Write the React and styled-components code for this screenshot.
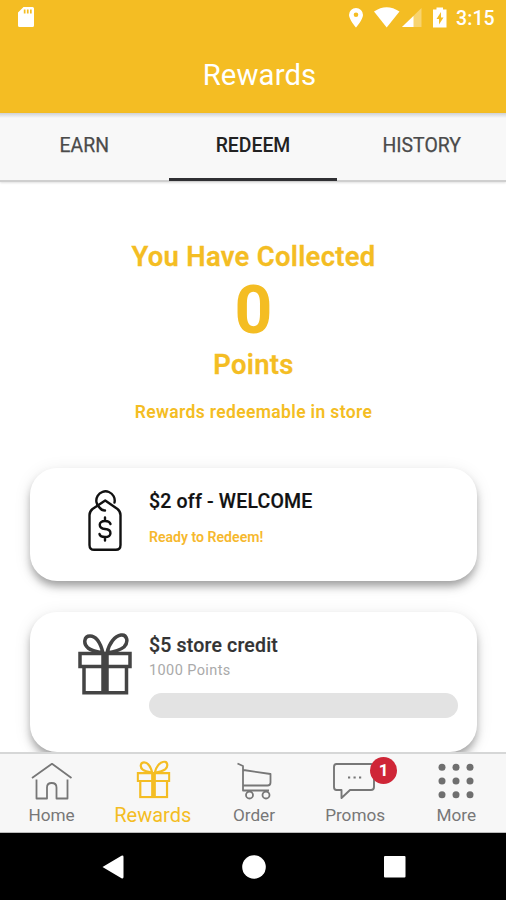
import React from "react";
import styled, { createGlobalStyle } from "styled-components";

const GOLD = "#f4bd23";

const GlobalStyle = createGlobalStyle`
  * { box-sizing: border-box; }
  body { margin: 0; background: #fff; font-family: Roboto, "Liberation Sans", sans-serif; }
  h1, h2, p { margin: 0; }
  svg { display: block; flex: none; }
`;

const Screen = styled.div`
  width: 506px;
  height: 900px;
  display: flex;
  flex-direction: column;
  overflow: hidden;
  background: #fff;
`;

const Header = styled.header`
  height: 113px;
  flex: none;
  background: ${GOLD};
  color: #fff;
`;

const StatusBar = styled.div`
  height: 36px;
  padding: 0 10px 0 16px;
  display: flex;
  justify-content: space-between;
  align-items: center;
`;

const StatusIcons = styled.div`
  display: flex;
  align-items: center;
`;

const Clock = styled.span`
  width: 40px;
  margin-left: 8px;
  padding-top: 1px;
  font-size: 19.5px;
  font-weight: 500;
  line-height: 36px;
  letter-spacing: 0.1px;
  white-space: nowrap;
`;

const Title = styled.h1`
  font-size: 29.3px;
  font-weight: 400;
  line-height: 34px;
  margin-top: 22px;
  padding-left: 13px;
  text-align: center;
  letter-spacing: 0.1px;
`;

const Tabs = styled.nav`
  height: 69px;
  flex: none;
  display: grid;
  grid-template-columns: repeat(3, 1fr);
  background: linear-gradient(#cfd1d5, #f8f8f8 5px);
  border-bottom: 2px solid #cfcfcf;
  box-shadow: 0 1px 2px rgba(0, 0, 0, 0.12);
`;

const Tab = styled.a`
  height: 68px;
  padding-top: 21px;
  border-bottom: 3px solid ${(p) => (p.$active ? "#303033" : "transparent")};
  text-align: center;
  font-size: 19.4px;
  font-weight: ${(p) => (p.$active ? 500 : 400)};
  line-height: 24px;
  color: ${(p) => (p.$active ? "#222" : "#4b4b4b")};
  -webkit-text-stroke: ${(p) => (p.$active ? 0 : 0.25)}px currentColor;
`;

const Content = styled.main`
  flex: 1;
  min-height: 0;
  overflow: hidden;
  display: flex;
  flex-direction: column;
`;

const Summary = styled.section`
  height: 286px;
  flex: none;
  padding: 59px 0 0 1px;
  display: flex;
  flex-direction: column;
  align-items: center;
  color: ${GOLD};
`;

const SummaryLabel = styled.h2`
  font-size: 27.4px;
  font-weight: 600;
  line-height: 32px;
  letter-spacing: 0.3px;
  -webkit-text-stroke: 0.3px currentColor;
`;

const Score = styled.div`
  font-size: 66px;
  font-weight: 700;
  line-height: 76px;
`;

const Hint = styled.p`
  margin-top: 20px;
  font-size: 17.5px;
  font-weight: 600;
  line-height: 22px;
  letter-spacing: 0.35px;
`;

const Card = styled.article`
  flex: none;
  height: ${(p) => p.$height}px;
  margin: 0 29px 31px 30px;
  border-radius: 27px;
  background: #fff;
  box-shadow: 0 6px 9px -1px rgba(0, 0, 0, 0.34), 0 3px 18px rgba(0, 0, 0, 0.09);
  display: grid;
  grid-template-columns: 119px 1fr;
  padding: 21px 19px 0 0;
`;

const CardIcon = styled.div`
  display: flex;
  justify-content: flex-end;
  align-items: flex-start;
  padding-right: ${(p) => p.$gap}px;
`;

const CardTitle = styled.h2`
  font-size: 19.5px;
  font-weight: 500;
  line-height: 26px;
  letter-spacing: 0.19px;
  color: ${(p) => p.$color};
  -webkit-text-stroke: 0.2px currentColor;
`;

const Ready = styled.p`
  margin-top: 12px;
  font-size: 14.1px;
  font-weight: 600;
  line-height: 20px;
  color: #f6b82e;
`;

const Cost = styled.p`
  margin-top: 2px;
  font-size: 14.5px;
  line-height: 20px;
  letter-spacing: 0.4px;
  color: #aaa;
`;

const Progress = styled.div`
  height: 25px;
  margin-top: 12px;
  border-radius: 13px;
  background: #e3e3e3;
`;

const BottomNav = styled.nav`
  height: 81px;
  flex: none;
  padding-left: 1px;
  display: grid;
  grid-template-columns: repeat(5, 101.2px);
  background: #f7f7f7;
  border-top: 2px solid #d6d7d7;
  border-bottom: 1px solid #bbb;
`;

const NavItem = styled.a`
  display: flex;
  flex-direction: column;
  align-items: center;
  color: ${(p) => (p.$active ? GOLD : "#777")};
  font-size: ${(p) => (p.$active ? 20 : 17.2)}px;
`;

const NavIcon = styled.div`
  position: relative;
  width: 64px;
  height: 48px;
`;

const NavLabel = styled.span`
  margin-top: 1px;
  line-height: 24px;
`;

const Badge = styled.span`
  position: absolute;
  left: 47px;
  top: 3px;
  width: 27px;
  height: 27px;
  border-radius: 50%;
  background: #cf2637;
  color: #fff;
  font-size: 17px;
  font-weight: 700;
  line-height: 27px;
  text-align: center;
`;

const SystemBar = styled.footer`
  height: 67px;
  flex: none;
  padding-left: 2px;
  display: flex;
  justify-content: center;
  align-items: center;
  gap: 118px;
  background: #000;
`;

function SdCard() {
  return (
    <svg width="20" height="22" viewBox="0 0 20 22">
      <path fill="#fff" fillRule="evenodd" d="M7.5 0H16.5Q18 0 18 1.500V18.500Q18 20 16.500 20H3.500Q2 20 2 18.500V5.500ZM7.800 2.500V6.500H9.500V2.500ZM10.900 2.500V6.500H12.600V2.500ZM14 2.500V6.500H15.700V2.500Z" />
    </svg>
  );
}

function SystemIcons() {
  return (
    <svg width="102" height="22" viewBox="346 7 102 22">
      <path fill="#fff" fillRule="evenodd" d="M356 8A7 7 0 0 1 363 15C363 19.5 356 27.500 356 27.500S349 19.500 349 15A7 7 0 0 1 356 8ZM356 12.400A2.300 2.300 0 1 0 356 17A2.300 2.300 0 0 0 356 12.400Z" />
      <path fill="#fff" d="M374 11.500Q386.500 3 399.500 11.500L386.700 27.500Z" />
      <path fill="#fff" opacity=".35" d="M421.500 8V27H402Z" />
      <path fill="#fff" d="M413.500 16V27H402Z" />
      <path fill="#fff" fillRule="evenodd" d="M433 9.500H436.500V7.500H443V9.500H446.500V27.500H433ZM441 12L436.500 19H439V24.500L443.500 17.500H441Z" />
    </svg>
  );
}

function TagIcon() {
  return (
    <svg width="36" height="64" viewBox="0 0 36 64" fill="none" stroke="#111" strokeWidth="2.400" strokeLinecap="round" strokeLinejoin="round">
      <path d="M27.500 13.500A9.200 9.200 0 1 0 12.500 18.500Q14.500 21.500 18 21.500" />
      <path d="M18.200 11.500L30.500 20Q33.500 22.500 33.500 26V56Q33.500 60.800 28.800 60.800H7.200Q2.500 60.800 2.500 56V26Q2.500 22.500 5.500 20Z" />
      <path d="M23.500 35Q22.500 32 18 32C11 32 11 39.500 18 40C25.500 40.500 25 48 18 48Q13 48 12.500 45M18 28.500V32M18 48V51.500" />
    </svg>
  );
}

function GiftIcon({ width, height, color }) {
  return (
    <svg width={width} height={height} viewBox="0 0 54 62" preserveAspectRatio="none" fill="none" stroke={color}>
      <path strokeWidth="3.500" d="M2 20.500H52V33.500H2ZM6 33V59.800H48.500V33" />
      <path strokeWidth="7.500" d="M27 19V60" />
      <path strokeWidth="3.500" d="M25 20C22 8 17 3 12 3C6 3 5 11 10 15C14 18 20 19 25 20ZM29 20C31 10 37 3 43 2C49 1 51 9 46 14C41 18 35 19 29 20Z" />
    </svg>
  );
}

function HomeIcon() {
  return (
    <svg width="64" height="48" viewBox="0 0 64 48" fill="none" stroke="#777" strokeWidth="1.800" strokeLinejoin="round">
      <path d="M12 24L32 9.800L51.500 24M16.500 25.500V44.500H27V33.500Q27 29 31.700 29Q36.500 29 36.500 33.500V44.500H47.500V25.500" />
    </svg>
  );
}

function CartIcon() {
  return (
    <svg width="64" height="48" viewBox="0 0 64 48" fill="none" stroke="#777" strokeWidth="1.800" strokeLinejoin="round">
      <path d="M15.500 9.500L21 12V36.500H47M21.500 16L48.500 20V28.500Q48.500 31.500 45.500 31.500H21.500" />
      <circle cx="27.500" cy="41" r="3.500" />
      <circle cx="44" cy="41" r="3.500" />
    </svg>
  );
}

function ChatIcon() {
  return (
    <svg width="64" height="48" viewBox="0 0 64 48" fill="none" stroke="#777" strokeWidth="1.900" strokeLinejoin="round">
      <path d="M13.500 10H48Q51 10 51 13V33Q51 36 48 36H27L18.500 44V36H13.500Q11 36 11 33V13Q11 10 13.500 10Z" />
      <path strokeWidth="2.200" strokeDasharray="2.200 3.300" d="M25 23.500H38.200" />
    </svg>
  );
}

function MoreIcon() {
  return (
    <svg width="64" height="48" viewBox="0 0 64 48" fill="#6f6f6f">
      {[13.2, 27, 40.8].map((y) => [18, 32, 46].map((x) => <circle key={`${x}-${y}`} cx={x} cy={y} r="3.500" />))}
    </svg>
  );
}

export default function App() {
  return (
    <Screen>
      <GlobalStyle />
      <Header>
        <StatusBar>
          <SdCard />
          <StatusIcons>
            <SystemIcons />
            <Clock>3:15</Clock>
          </StatusIcons>
        </StatusBar>
        <Title>Rewards</Title>
      </Header>
      <Tabs>
        <Tab>EARN</Tab>
        <Tab $active>REDEEM</Tab>
        <Tab>HISTORY</Tab>
      </Tabs>
      <Content>
        <Summary>
          <SummaryLabel>You Have Collected</SummaryLabel>
          <Score>0</Score>
          <SummaryLabel>Points</SummaryLabel>
          <Hint>Rewards redeemable in store</Hint>
        </Summary>
        <Card $height={113}>
          <CardIcon $gap={26}><TagIcon /></CardIcon>
          <div>
            <CardTitle $color="#111">$2 off - WELCOME</CardTitle>
            <Ready>Ready to Redeem!</Ready>
          </div>
        </Card>
        <Card $height={140}>
          <CardIcon $gap={17}><GiftIcon width={54} height={62} color="#444" /></CardIcon>
          <div>
            <CardTitle $color="#333">$5 store credit</CardTitle>
            <Cost>1000 Points</Cost>
            <Progress />
          </div>
        </Card>
      </Content>
      <BottomNav>
        <NavItem>
          <NavIcon><HomeIcon /></NavIcon>
          <NavLabel>Home</NavLabel>
        </NavItem>
        <NavItem $active>
          <NavIcon>
            <svg width="64" height="48" viewBox="0 0 64 48">
              <g transform="translate(15.500 6.500)"><GiftIcon width={34} height={38} color={GOLD} /></g>
            </svg>
          </NavIcon>
          <NavLabel>Rewards</NavLabel>
        </NavItem>
        <NavItem>
          <NavIcon><CartIcon /></NavIcon>
          <NavLabel>Order</NavLabel>
        </NavItem>
        <NavItem>
          <NavIcon><ChatIcon /><Badge>1</Badge></NavIcon>
          <NavLabel>Promos</NavLabel>
        </NavItem>
        <NavItem>
          <NavIcon><MoreIcon /></NavIcon>
          <NavLabel>More</NavLabel>
        </NavItem>
      </BottomNav>
      <SystemBar>
        <svg width="22" height="24" viewBox="0 0 22 24"><path fill="#fff" d="M.5 12L19.500 .8Q21.500 0 21.500 2V22Q21.500 24 19.500 23.200Z" /></svg>
        <svg width="24" height="24" viewBox="0 0 24 24"><circle cx="12" cy="12" r="11.800" fill="#fff" /></svg>
        <svg width="22" height="22" viewBox="0 0 22 22"><rect width="21.500" height="21.500" rx="1" fill="#fff" /></svg>
      </SystemBar>
    </Screen>
  );
}
